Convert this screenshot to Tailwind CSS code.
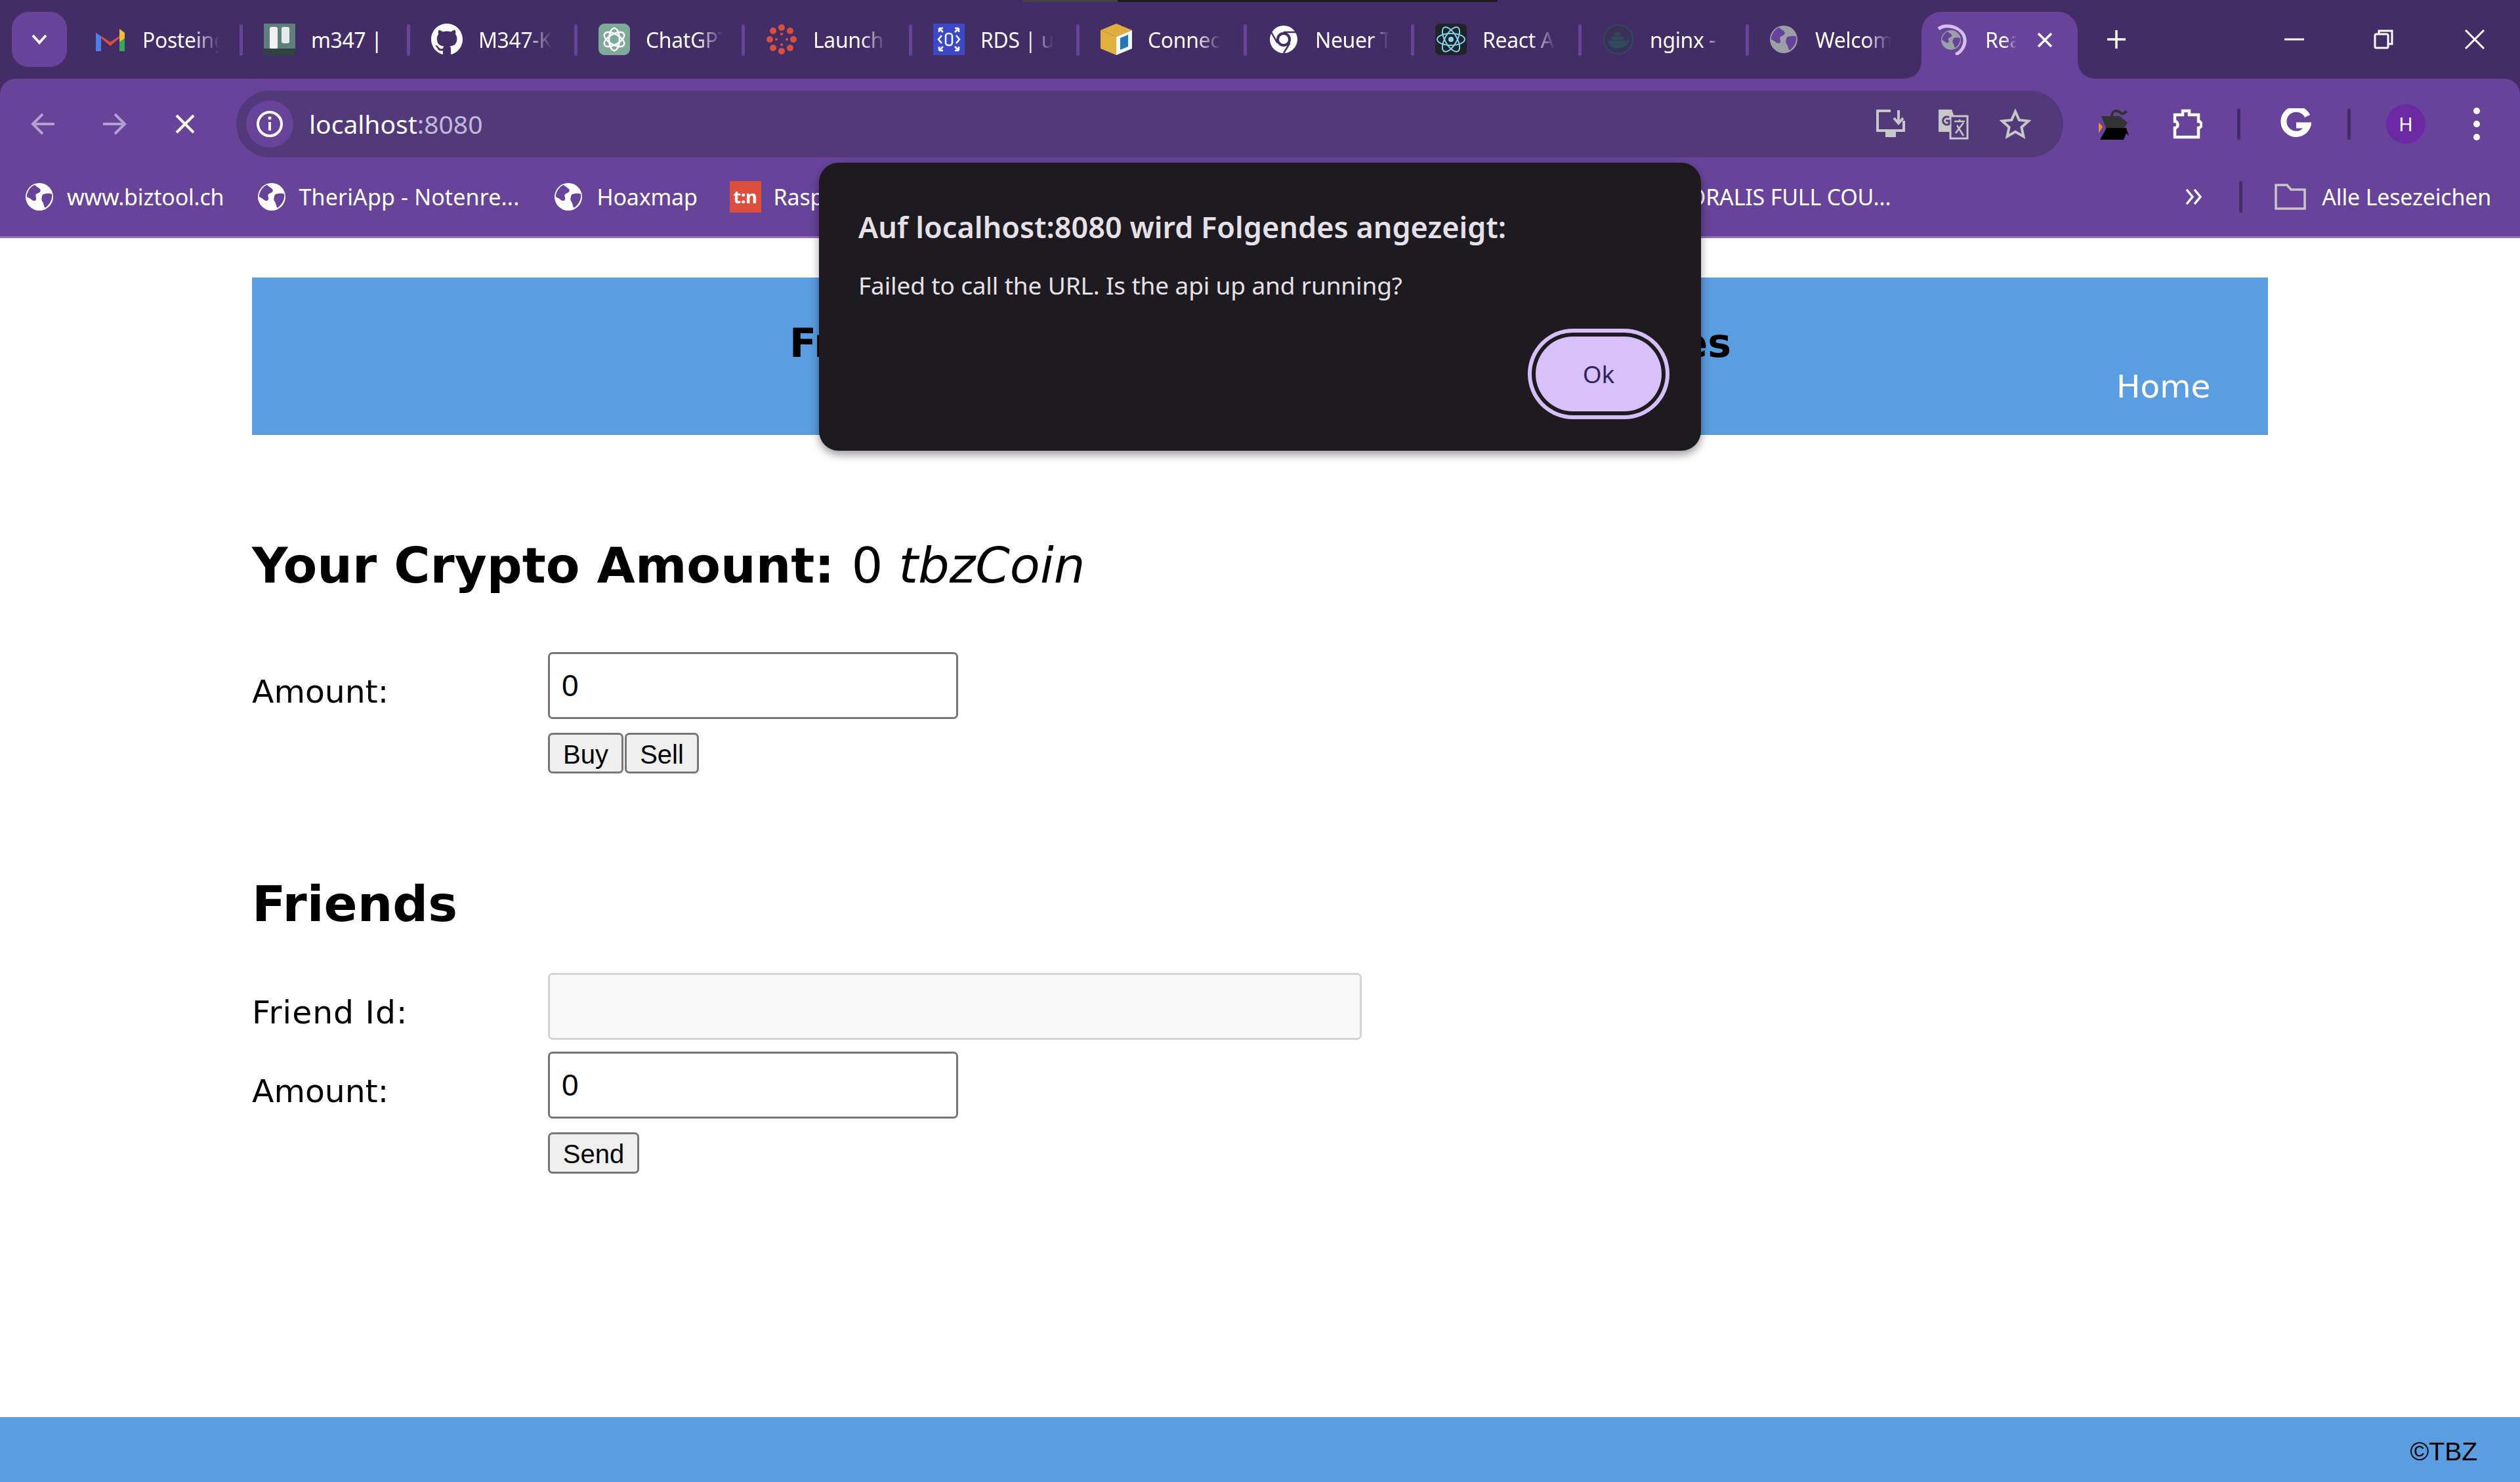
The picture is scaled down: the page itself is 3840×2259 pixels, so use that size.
<!DOCTYPE html>
<html lang="en">
<head>
<meta charset="UTF-8">
<title>React App</title>
<script src="https://cdn.jsdelivr.net/npm/@tailwindcss/browser@4"></script>
</head>
<body class="w-[3840px] h-[2259px] overflow-hidden bg-white relative flex flex-col font-['DejaVu_Sans',sans-serif] text-black">

<svg class="hidden">
  <symbol id="globe" viewBox="0 0 24 24">
    <circle cx="12" cy="12" r="12" fill="currentColor"/>
    <path d="M8 1.500c2 2.500 5 2.500 5 5 0 2-3 2-4 3.500-1 1.600 1 2.500 0 4.500-1 1.500-3 1-4.500-.5-1-1-2.500-1.500-3.500-2C1 8 4 3 8 1.500zM15 10c2-1 5-1.500 8-.5.500 4-1.500 9-6 12-1.500-1.500-1-4-2.500-5.500-1-1.500-.5-4.500.5-6z" fill="#67449a"/>
  </symbol>
</svg>

<!-- tab strip -->
<div class="relative h-[120px] shrink-0 bg-[#422d66] flex font-['Noto_Sans',sans-serif] text-[32px] tracking-[-0.4px] text-white">
  <div class="absolute left-[1559px] top-0 w-[723px] h-[3px] bg-[#1e1c22]"><div class="w-[144px] h-[3px] bg-[#444444]"></div></div>

  <div class="w-[84px] h-[84px] ml-[18px] mt-[18px] mr-[9px] rounded-[26px] bg-[#67449a] flex items-center justify-center shrink-0">
    <svg width="26" height="18" viewBox="0 0 26 18"><path d="M3 3l10 11L23 3" fill="none" stroke="white" stroke-width="4"/></svg>
  </div>

  <!-- tabs -->
  <div class="w-[256px] h-[84px] mt-[18px] pl-[35px] flex items-center relative shrink-0">
    <svg class="w-[44px] h-[48px] shrink-0 mr-[27px]" viewBox="0 0 44 48"><path d="M0 14v28h8V22l14 12 14-12v20h8V14L22 28z" fill="#d9503f"/><path d="M0 14v28h8V20z" fill="#4a80e8"/><path d="M44 14v28h-8V20z" fill="#3fa45b"/><path d="M36 8l8 6v8l-8 6z" fill="#f2c037"/></svg>
    <span class="w-[118px] overflow-hidden whitespace-nowrap pt-[2px] [mask-image:linear-gradient(to_right,black_65%,transparent)]">Posteingang</span>
    <div class="absolute -right-[3px] top-[19px] w-[5px] h-[48px] rounded-full bg-[#67449a]"></div>
  </div>
  <div class="w-[255px] h-[84px] mt-[18px] pl-[35px] flex items-center relative shrink-0">
    <svg class="w-[48px] h-[48px] shrink-0 mr-[24px]" viewBox="0 0 48 48"><rect width="48" height="48" fill="#5f7f7a"/><rect x="9" y="5" width="12" height="34" rx="3" fill="#f1f3f2"/><rect x="27" y="5" width="12" height="25" rx="3" fill="#e6eaea"/><rect y="38" width="48" height="10" fill="#2f4442"/></svg>
    <span class="w-[118px] overflow-hidden whitespace-nowrap pt-[2px]">m347 |</span>
    <div class="absolute -right-[3px] top-[19px] w-[5px] h-[48px] rounded-full bg-[#67449a]"></div>
  </div>
  <div class="w-[255px] h-[84px] mt-[18px] pl-[35px] flex items-center relative shrink-0">
    <svg class="w-[48px] h-[48px] shrink-0 mr-[24px]" viewBox="0 0 16 16"><path fill="white" d="M8 0C3.580 0 0 3.580 0 8c0 3.540 2.290 6.530 5.470 7.590.4.070.55-.17.55-.38 0-.19-.01-.82-.01-1.490-2.010.37-2.530-.49-2.690-.94-.09-.23-.48-.94-.82-1.130-.28-.15-.68-.52-.01-.53.63-.01 1.080.58 1.230.82.72 1.210 1.870.87 2.330.66.07-.52.28-.87.51-1.070-1.780-.2-3.640-.89-3.640-3.950 0-.87.31-1.590.82-2.150-.08-.2-.36-1.020.08-2.120 0 0 .67-.21 2.200.82.64-.18 1.320-.27 2-.27s1.360.09 2 .27c1.530-1.040 2.200-.82 2.200-.82.44 1.100.16 1.920.08 2.120.51.56.82 1.270.82 2.150 0 3.070-1.870 3.750-3.650 3.950.29.25.54.73.54 1.480 0 1.070-.01 1.930-.01 2.200 0 .21.15.46.55.38A8.010 8.010 0 0 0 16 8c0-4.420-3.580-8-8-8z"/></svg>
    <span class="w-[112px] overflow-hidden whitespace-nowrap pt-[2px] [mask-image:linear-gradient(to_right,black_65%,transparent)]">M347-Kubernetes</span>
    <div class="absolute -right-[3px] top-[19px] w-[5px] h-[48px] rounded-full bg-[#67449a]"></div>
  </div>
  <div class="w-[255px] h-[84px] mt-[18px] pl-[35px] flex items-center relative shrink-0">
    <svg class="w-[48px] h-[48px] shrink-0 mr-[24px]" viewBox="0 0 48 48"><rect width="48" height="48" rx="9" fill="#7fa99b"/><g fill="none" stroke="white" stroke-width="2.500"><ellipse cx="24" cy="24" rx="8" ry="17"/><ellipse cx="24" cy="24" rx="8" ry="17" transform="rotate(60 24 24)"/><ellipse cx="24" cy="24" rx="8" ry="17" transform="rotate(120 24 24)"/></g></svg>
    <span class="w-[118px] overflow-hidden whitespace-nowrap pt-[2px] [mask-image:linear-gradient(to_right,black_65%,transparent)]">ChatGPT</span>
    <div class="absolute -right-[3px] top-[19px] w-[5px] h-[48px] rounded-full bg-[#67449a]"></div>
  </div>
  <div class="w-[255px] h-[84px] mt-[18px] pl-[35px] flex items-center relative shrink-0">
    <svg class="w-[48px] h-[48px] shrink-0 mr-[24px]" viewBox="0 0 48 48"><g fill="#d9503f"><circle cx="24" cy="6" r="5"/><circle cx="24" cy="42" r="5"/><circle cx="6" cy="24" r="5"/><circle cx="42" cy="24" r="5"/><circle cx="11" cy="11" r="5"/><circle cx="37" cy="11" r="5"/><circle cx="11" cy="37" r="5"/><circle cx="37" cy="37" r="5"/><circle cx="24" cy="16" r="2"/><circle cx="24" cy="32" r="2"/><circle cx="16" cy="24" r="2"/><circle cx="32" cy="24" r="2"/></g></svg>
    <span class="w-[112px] overflow-hidden whitespace-nowrap pt-[2px] [mask-image:linear-gradient(to_right,black_65%,transparent)]">Launch School</span>
    <div class="absolute -right-[3px] top-[19px] w-[5px] h-[48px] rounded-full bg-[#67449a]"></div>
  </div>
  <div class="w-[255px] h-[84px] mt-[18px] pl-[35px] flex items-center relative shrink-0">
    <svg class="w-[48px] h-[48px] shrink-0 mr-[24px]" viewBox="0 0 48 48"><rect width="48" height="48" fill="#3c48c8"/><rect x="19" y="15" width="10" height="18" rx="4" fill="none" stroke="white" stroke-width="2.500"/><path d="M9 7l6 6M9 7v6M9 7h6M39 7l-6 6M39 7v6M39 7h-6M9 41l6-6M9 41v-6M9 41h6M39 41l-6-6M39 41v-6M39 41h-6M13 18l-5 6 5 6M35 18l5 6-5 6" stroke="white" stroke-width="2.500" fill="none"/></svg>
    <span class="w-[112px] overflow-hidden whitespace-nowrap pt-[2px] [mask-image:linear-gradient(to_right,black_65%,transparent)]">RDS | us-east-1</span>
    <div class="absolute -right-[3px] top-[19px] w-[5px] h-[48px] rounded-full bg-[#67449a]"></div>
  </div>
  <div class="w-[255px] h-[84px] mt-[18px] pl-[35px] flex items-center relative shrink-0">
    <svg class="w-[48px] h-[48px] shrink-0 mr-[24px]" viewBox="0 0 48 48"><path d="M24 0l24 10-24 10L0 10z" fill="#e0ad3f"/><path d="M0 10l24 10v28L0 38z" fill="#e3b040"/><path d="M48 10L24 20v28l24-10z" fill="#f4f7fa"/><path d="M30 22l12-5v18l-12 5z" fill="#2478b8"/></svg>
    <span class="w-[112px] overflow-hidden whitespace-nowrap pt-[2px] [mask-image:linear-gradient(to_right,black_65%,transparent)]">Connect</span>
    <div class="absolute -right-[3px] top-[19px] w-[5px] h-[48px] rounded-full bg-[#67449a]"></div>
  </div>
  <div class="w-[255px] h-[84px] mt-[18px] pl-[35px] flex items-center relative shrink-0">
    <svg class="w-[48px] h-[48px] shrink-0 mr-[24px]" viewBox="0 0 48 48"><circle cx="24" cy="24" r="21" fill="white"/><circle cx="24" cy="24" r="11" fill="#422d66"/><circle cx="24" cy="24" r="7" fill="white"/><path d="M24 13h19M14.500 29.500L5 13M33.500 29.500L24 45" stroke="#422d66" stroke-width="2.500"/></svg>
    <span class="w-[112px] overflow-hidden whitespace-nowrap pt-[2px] [mask-image:linear-gradient(to_right,black_75%,transparent)]">Neuer Tab</span>
    <div class="absolute -right-[3px] top-[19px] w-[5px] h-[48px] rounded-full bg-[#67449a]"></div>
  </div>
  <div class="w-[255px] h-[84px] mt-[18px] pl-[35px] flex items-center relative shrink-0">
    <svg class="w-[48px] h-[48px] shrink-0 mr-[24px]" viewBox="0 0 48 48"><rect width="48" height="48" rx="7" fill="#20232a"/><g fill="none" stroke="#7fd3ec" stroke-width="2"><ellipse cx="24" cy="24" rx="21" ry="9"/><ellipse cx="24" cy="24" rx="21" ry="9" transform="rotate(60 24 24)"/><ellipse cx="24" cy="24" rx="21" ry="9" transform="rotate(120 24 24)"/></g><circle cx="24" cy="24" r="4" fill="#7fd3ec"/></svg>
    <span class="w-[112px] overflow-hidden whitespace-nowrap pt-[2px] [mask-image:linear-gradient(to_right,black_65%,transparent)]">React App</span>
    <div class="absolute -right-[3px] top-[19px] w-[5px] h-[48px] rounded-full bg-[#67449a]"></div>
  </div>
  <div class="w-[255px] h-[84px] mt-[18px] pl-[35px] flex items-center relative shrink-0">
    <svg class="w-[48px] h-[48px] shrink-0 mr-[24px]" viewBox="0 0 48 48"><circle cx="24" cy="24" r="22" fill="#3b3058" stroke="#2f4a5c" stroke-width="2"/><path d="M8 26h28c2 0 4-2 5-3 0 8-8 15-18 15-8 0-14-4-15-12z" fill="#2f4a5c"/><path d="M14 20h18v5H14zM19 13h8v6h-8z" fill="#2f4a5c"/></svg>
    <span class="w-[112px] overflow-hidden whitespace-nowrap pt-[2px] [mask-image:linear-gradient(to_right,black_70%,transparent)]">nginx - </span>
    <div class="absolute -right-[3px] top-[19px] w-[5px] h-[48px] rounded-full bg-[#67449a]"></div>
  </div>
  <div class="w-[255px] h-[84px] mt-[18px] pl-[35px] flex items-center shrink-0">
    <svg class="w-[42px] h-[42px] shrink-0 mr-[27px] text-[#9aa0a6]"><use href="#globe"/></svg>
    <span class="w-[116px] overflow-hidden whitespace-nowrap pt-[2px] [mask-image:linear-gradient(to_right,black_65%,transparent)]">Welcome to nginx</span>
  </div>

  <!-- active tab -->
  <div class="absolute left-[2928px] top-[18px] w-[238px] h-[102px] rounded-t-[30px] bg-[#67449a] flex items-center pb-[18px]">
    <svg class="absolute -left-[30px] bottom-0" width="30" height="30" viewBox="0 0 30 30"><path d="M0 30Q30 30 30 0V30Z" fill="#67449a"/></svg>
    <svg class="absolute -right-[30px] bottom-0" width="30" height="30" viewBox="0 0 30 30"><path d="M30 30Q0 30 0 0V30Z" fill="#67449a"/></svg>
    <div class="relative w-[48px] h-[48px] ml-[22px] shrink-0">
      <svg class="absolute inset-0" width="48" height="48" viewBox="0 0 48 48"><path d="M4 8C16 -2 42 6 44 24c1 10-6 20-14 23" fill="none" stroke="#d6bff8" stroke-width="5"/></svg>
      <svg class="absolute left-[8px] top-[10px] w-[30px] h-[30px] text-[#9aa0a6]"><use href="#globe"/></svg>
    </div>
    <span class="ml-[27px] w-[48px] overflow-hidden whitespace-nowrap pt-[2px] [mask-image:linear-gradient(to_right,black_60%,transparent)]">React App</span>
    <svg class="absolute left-[175px] top-[30px]" width="26" height="26" viewBox="0 0 26 26"><path d="M3 3l20 20M23 3L3 23" stroke="white" stroke-width="3.500"/></svg>
  </div>

  <!-- new tab and window buttons -->
  <svg class="absolute left-[3209px] top-[44px]" width="32" height="32" viewBox="0 0 32 32"><path d="M16 2v28M2 16h28" stroke="white" stroke-width="3.500"/></svg>
  <svg class="absolute left-[3481px] top-[54px]" width="30" height="12" viewBox="0 0 30 12"><path d="M0 6h30" stroke="white" stroke-width="3"/></svg>
  <svg class="absolute left-[3617px] top-[45px]" width="30" height="30" viewBox="0 0 30 30"><rect x="2" y="7" width="20" height="21" rx="2" fill="none" stroke="white" stroke-width="3"/><path d="M8 7V2h20v20h-6" fill="none" stroke="white" stroke-width="3"/></svg>
  <svg class="absolute left-[3756px] top-[45px]" width="30" height="30" viewBox="0 0 30 30"><path d="M1 1l28 28M29 1L1 29" stroke="white" stroke-width="3"/></svg>
</div>

<!-- toolbar and bookmarks -->
<div class="bg-[#422d66] shrink-0">
  <div class="h-[243px] rounded-t-[24px] bg-[#67449a] border-b-[3px] border-[#8e70b8] font-['Noto_Sans',sans-serif] text-white">
    <div class="pt-[18px] h-[120px] flex items-center">
      <div class="ml-[12px] w-[108px] flex justify-center">
        <svg width="38" height="36" viewBox="0 0 38 36"><path d="M36 18H4M18 3L3 18l15 15" fill="none" stroke="#b3a0cf" stroke-width="4"/></svg>
      </div>
      <div class="w-[108px] flex justify-center">
        <svg width="38" height="36" viewBox="0 0 38 36"><path d="M2 18h32M20 3l15 15-15 15" fill="none" stroke="#b3a0cf" stroke-width="4"/></svg>
      </div>
      <div class="w-[108px] flex justify-center">
        <svg width="32" height="32" viewBox="0 0 32 32"><path d="M3 3l26 26M29 3L3 29" stroke="white" stroke-width="4"/></svg>
      </div>
      <div class="ml-[24px] w-[2784px] h-[102px] rounded-full bg-[#51397a] flex items-center pl-[15px] pr-[49px] gap-[47px]">
        <div class="w-[72px] h-[72px] rounded-full bg-[#67449a] flex items-center justify-center shrink-0">
          <svg width="42" height="42" viewBox="0 0 42 42"><circle cx="21" cy="21" r="18" fill="none" stroke="white" stroke-width="4"/><path d="M21 18v13" stroke="white" stroke-width="4"/><circle cx="21" cy="12" r="2.500" fill="white"/></svg>
        </div>
        <div class="-ml-[23px] mr-auto text-[39px] whitespace-nowrap">localhost<span class="text-[#c4b7d9]">:8080</span></div>
        <svg class="shrink-0" width="48" height="46" viewBox="0 0 48 46"><path d="M24 3H4v30h40V18" fill="none" stroke="#c7c7c7" stroke-width="4"/><path d="M16 33h16v10H16z" fill="#c7c7c7"/><path d="M36 2v18M29 14l7 8 7-8" fill="none" stroke="#c7c7c7" stroke-width="4"/></svg>
        <svg class="shrink-0" width="48" height="48" viewBox="0 0 48 48"><path d="M2 2h20l12 34H2z" fill="#c7c7c7"/><rect x="20" y="12" width="26" height="34" fill="#51397a" stroke="#c7c7c7" stroke-width="3"/><path d="M26 20h16M34 17v3M28 38l12-16M30 26l10 16" stroke="#c7c7c7" stroke-width="2.500" fill="none"/><path d="M18 14a6 6 0 1 0 0 10v-5h-5" fill="none" stroke="#51397a" stroke-width="3"/></svg>
        <svg class="shrink-0" width="48" height="48" viewBox="0 0 48 48"><path d="M24 5l5.800 13 14.200 1.500-10.600 9.500 3 14-12.400-7.200L11.600 43l3-14L4 19.500 18.200 18z" fill="none" stroke="#c7c7c7" stroke-width="4"/></svg>
      </div>
      <svg class="ml-[54px] shrink-0" width="48" height="48" viewBox="0 0 48 48"><path d="M4 12h28l12 10-6 10H12z" fill="#333333"/><path d="M12 30h30l4 12-4-4-4 10H2z" fill="#000000"/><path d="M0 22l6 6-6 10z" fill="#f29423"/><path d="M20 12c0-8 8-10 12-6s8 2 10-2" fill="none" stroke="#333333" stroke-width="4"/></svg>
      <svg class="ml-[62px] shrink-0" width="48" height="48" viewBox="0 0 48 48"><path d="M6 10h12V4h10v6h14v10c6 0 6 10 0 10v14H6V30c6 0 6-10 0-10z" fill="none" stroke="white" stroke-width="4.500"/></svg>
      <div class="ml-[53px] w-[5px] h-[48px] rounded-full bg-[#422d66] shrink-0"></div>
      <svg class="ml-[60px] shrink-0" width="48" height="48" viewBox="0 0 48 48"><path d="M42 12A19 19 0 1 0 43 26H25" fill="none" stroke="white" stroke-width="9"/></svg>
      <div class="ml-[55px] w-[5px] h-[48px] rounded-full bg-[#422d66] shrink-0"></div>
      <div class="ml-[54px] w-[60px] h-[60px] rounded-full bg-[#6b2aa3] flex items-center justify-center text-[29px] shrink-0">H</div>
      <div class="ml-[72px] w-[12px] flex flex-col items-center gap-[10px] shrink-0">
        <div class="w-[10px] h-[10px] rounded-full bg-white"></div>
        <div class="w-[10px] h-[10px] rounded-full bg-white"></div>
        <div class="w-[10px] h-[10px] rounded-full bg-white"></div>
      </div>
    </div>
    <div class="h-[120px] flex items-center text-[34px] tracking-[-0.2px] whitespace-nowrap">
      <svg class="ml-[39px] w-[42px] h-[42px] text-white shrink-0"><use href="#globe"/></svg>
      <span class="ml-[21px]">www.biztool.ch</span>
      <svg class="ml-[52px] w-[42px] h-[42px] text-white shrink-0"><use href="#globe"/></svg>
      <span class="ml-[20px] tracking-[0.15px]">TheriApp - Notenre...</span>
      <svg class="ml-[54px] w-[42px] h-[42px] text-white shrink-0"><use href="#globe"/></svg>
      <span class="ml-[22px]">Hoaxmap</span>
      <div class="ml-[49px] w-[48px] h-[48px] bg-[#dc4f3e] flex items-center justify-center text-[27px] font-bold shrink-0">t:n</div>
      <span class="ml-[19px]">Raspberry</span>
      <span class="ml-auto">ORALIS FULL COU...</span>
      <svg class="ml-[448px] shrink-0" width="28" height="28" viewBox="0 0 28 28"><path d="M3 3l9 11-9 11M15 3l9 11-9 11" fill="none" stroke="white" stroke-width="3.500"/></svg>
      <div class="ml-[55px] w-[5px] h-[48px] rounded-full bg-[#422d66] shrink-0"></div>
      <svg class="ml-[49px] shrink-0" width="48" height="40" viewBox="0 0 48 40"><path d="M2 2h17l6 7h21v29H2z" fill="none" stroke="#c7c7c7" stroke-width="3.500"/></svg>
      <span class="ml-[24px] mr-[44px]">Alle Lesezeichen</span>
    </div>
  </div>
</div>

<!-- page -->
<div class="flex-1 flex flex-col">
  <div class="w-[3072px] mx-auto">
    <div class="mt-[60px] h-[240px] bg-[#5a9de0] flex items-start">
      <div class="ml-[819px] mt-[62px] w-[1435px] flex justify-between text-[60px] font-bold leading-[76px]"><span>Fr</span><span>es</span></div>
      <a class="ml-[587px] mt-[138px] text-[48.5px] leading-[56px] text-white">Home</a>
    </div>

    <h1 class="mt-[149px] text-[75.3px] leading-[100px] font-bold">Your Crypto Amount: <span class="font-normal">0 <i>tbzCoin</i></span></h1>

    <div class="mt-[82px] flex items-start">
      <label class="w-[451px] pt-[31px] text-[48.8px] leading-[60px]">Amount:</label>
      <div>
        <input type="text" value="0" class="block w-[625px] h-[102px] pl-[18px] border-[3px] border-[#767676] rounded-[7px] font-['Liberation_Sans',sans-serif] text-[46px]">
        <div class="mt-[21px] flex gap-[2px]">
          <button class="w-[115px] h-[62px] border-[3px] border-[#767676] rounded-[7px] bg-[#efefef] font-['Liberation_Sans',sans-serif] text-[40px]">Buy</button>
          <button class="w-[113px] h-[62px] border-[3px] border-[#767676] rounded-[7px] bg-[#efefef] font-['Liberation_Sans',sans-serif] text-[40px]">Sell</button>
        </div>
      </div>
    </div>

    <h2 class="mt-[149px] text-[75.3px] leading-[100px] font-bold">Friends</h2>

    <div class="mt-[55px] flex items-start">
      <label class="w-[451px] pt-[31px] text-[48.8px] leading-[60px] tracking-[1px]">Friend Id:</label>
      <input type="text" disabled class="block w-[1240px] h-[102px] border-[3px] border-[#d4d4d4] rounded-[7px] bg-[#f8f8f8]">
    </div>
    <div class="mt-[18px] flex items-start">
      <label class="w-[451px] pt-[31px] text-[48.8px] leading-[60px]">Amount:</label>
      <div>
        <input type="text" value="0" class="block w-[625px] h-[102px] pl-[18px] border-[3px] border-[#767676] rounded-[7px] font-['Liberation_Sans',sans-serif] text-[46px]">
        <button class="mt-[21px] w-[139px] h-[63px] border-[3px] border-[#767676] rounded-[7px] bg-[#efefef] font-['Liberation_Sans',sans-serif] text-[40px]">Send</button>
      </div>
    </div>
  </div>

  <div class="mt-auto h-[99px] pt-[7px] bg-[#5a9de0] flex items-center justify-end pr-[65px] font-['Liberation_Sans',sans-serif] text-[39px]">©TBZ</div>
</div>

<!-- alert dialog -->
<div class="absolute left-[1248px] top-[248px] w-[1344px] h-[439px] rounded-[30px] bg-[#1d1b20] shadow-[0_6px_14px_rgba(0,0,0,0.4)] font-['Noto_Sans',sans-serif] text-[#e6e0e9]">
  <div class="ml-[60px] mt-[68px] text-[45px] leading-[60px] font-semibold whitespace-nowrap">Auf localhost:8080 wird Folgendes angezeigt:</div>
  <div class="ml-[60px] mt-[34px] text-[37px] leading-[50px] tracking-[-0.15px] whitespace-nowrap">Failed to call the URL. Is the api up and running?</div>
  <button class="absolute left-[1092px] top-[265px] w-[192px] h-[114px] rounded-full bg-[#d8c0f8] text-[#32245a] text-[37px] shadow-[0_0_0_6px_#1d1b20,0_0_0_12px_#d6bff8]">Ok</button>
</div>

</body>
</html>
